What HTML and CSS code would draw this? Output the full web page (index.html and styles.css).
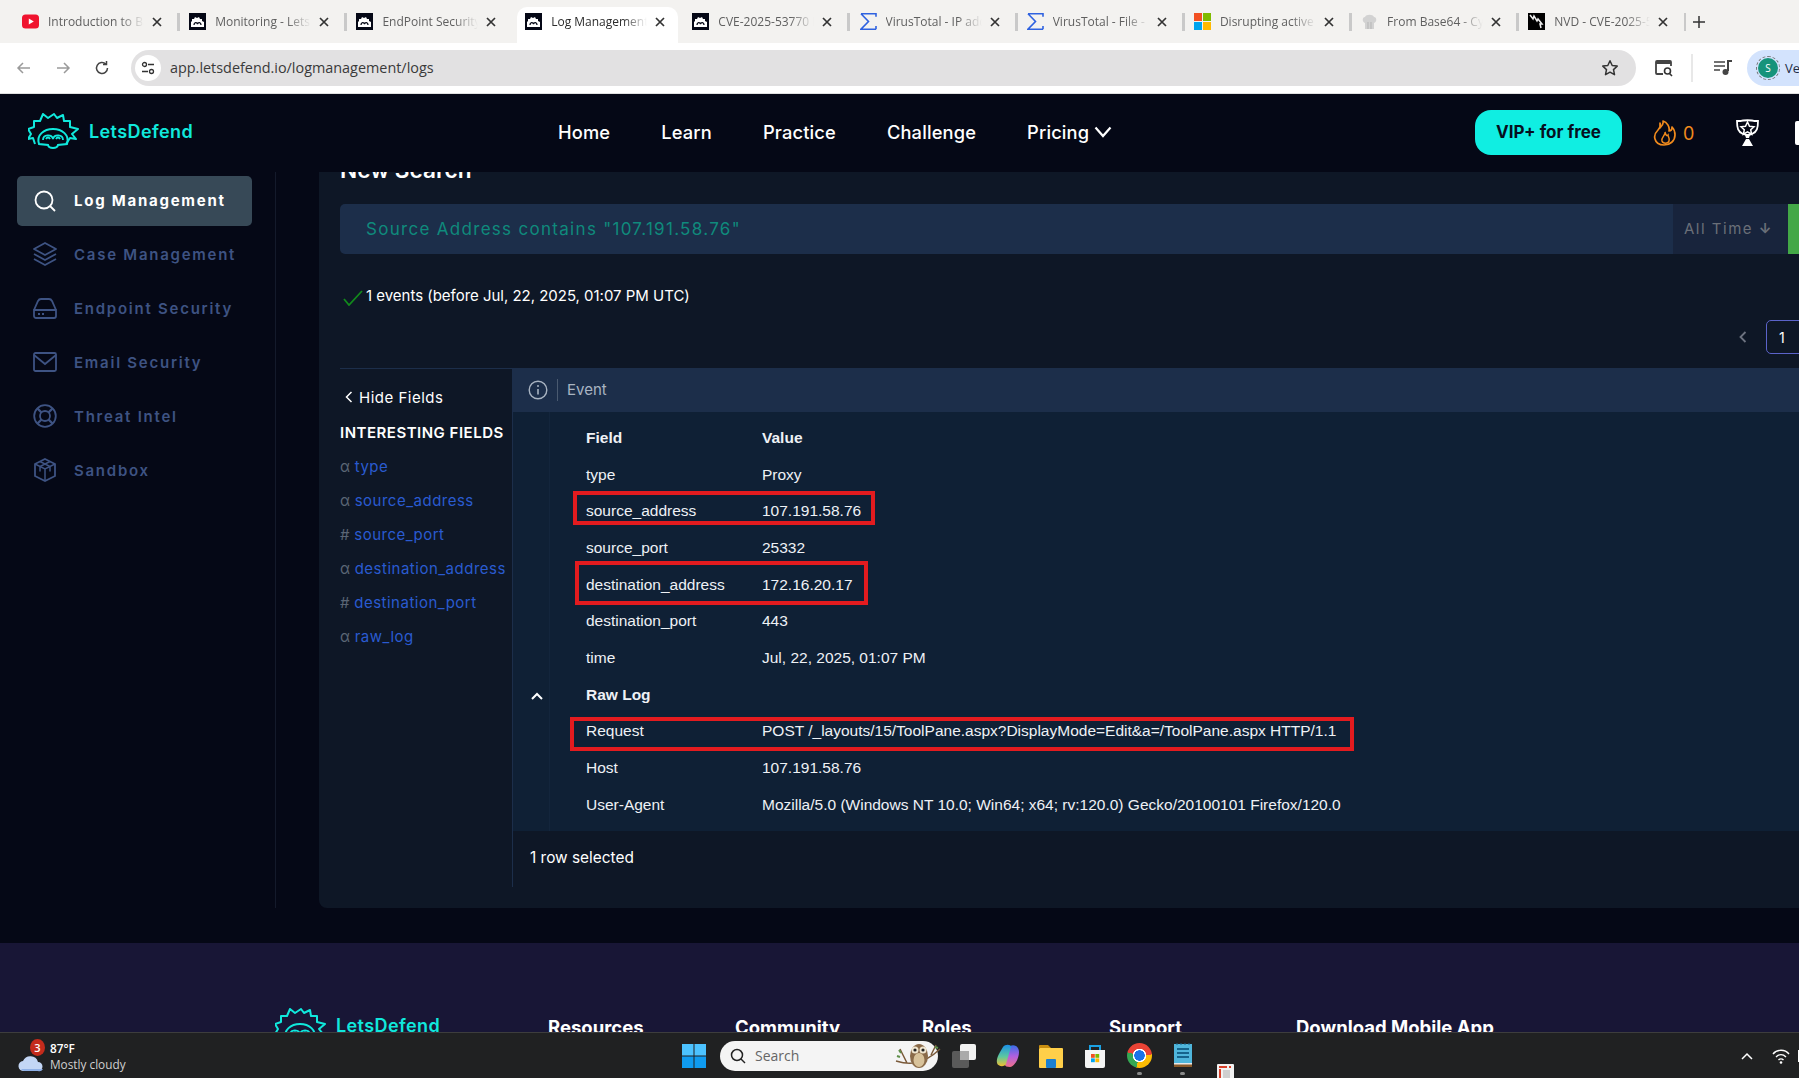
FILE: index.html
```html
<!DOCTYPE html>
<html lang="en">
<head>
  <meta charset="UTF-8">
  <title>Log Management - LetsDefend</title>
  <meta name="viewport" content="width=device-width, initial-scale=1.0">
  <link rel="stylesheet" href="styles.css">
</head>
<body>

  <svg class="defs" width="0" height="0">
    <symbol id="logo" viewBox="0 0 51 38">
      <path d="M7 31 5 25 0 26 3 21 0 16 6 14 6 8 12 8 15 1 20 5 26 1 29 5 35 2 36 8 42 8 42 14 50 16 44 21 48 26 42 25 38 31" fill="none" stroke="#10e8dc" stroke-width="2" stroke-linejoin="round"/>
      <path d="M11 31c-3-9 5-15 14-15s17 6 14 15l-9 1c-1 4-9 4-10 0z" fill="none" stroke="#10e8dc" stroke-width="2"/>
      <path d="M15 27c0-6 9-6 10-1 1-5 10-5 10 1M18 26c1-2 3-2 4 0M28 26c1-2 3-2 4 0" fill="none" stroke="#10e8dc" stroke-width="1.8"/>
    </symbol>
    <symbol id="fav-ld" viewBox="0 0 17 17">
      <rect width="17" height="17" fill="#050816"/>
      <path d="M2 14V9l1-1V6l2 0 1-2 2 1 2-1 1 2 2 0 0 2 2 1v5z" fill="#fff"/>
      <path d="M5 12c0-3 3-3 3.500-1C9 9 12 9 12 12" fill="none" stroke="#050816" stroke-width="1.300"/>
    </symbol>
    <symbol id="fav-vt" viewBox="0 0 17 17">
      <path d="M1 .8h15v3M16 16.200H1L8.500 8.500 1 .8M16 13v3.200" fill="none" stroke="#2f62e0" stroke-width="1.600"/>
    </symbol>
    <symbol id="close-x" viewBox="0 0 10 10">
      <path d="M1 1l8 8M9 1 1 9" stroke="#333" stroke-width="1.700" fill="none"/>
    </symbol>
  </svg>

  <div class="tabstrip">
    <div class="tab">
      <svg class="fav" viewBox="0 0 17 17"><rect y="1.500" width="17" height="14" rx="3.500" fill="#f0142f"/><path d="M6.800 5.500v6l5-3z" fill="#fff"/></svg>
      <span class="tab-title">Introduction to Bash</span>
      <svg class="tab-close"><use href="#close-x"/></svg>
      <i class="tab-sep"></i>
    </div>
    <div class="tab">
      <svg class="fav"><use href="#fav-ld"/></svg>
      <span class="tab-title">Monitoring - LetsDefend</span>
      <svg class="tab-close"><use href="#close-x"/></svg>
      <i class="tab-sep"></i>
    </div>
    <div class="tab">
      <svg class="fav"><use href="#fav-ld"/></svg>
      <span class="tab-title">EndPoint Security</span>
      <svg class="tab-close"><use href="#close-x"/></svg>
    </div>
    <div class="tab tab-active">
      <svg class="fav"><use href="#fav-ld"/></svg>
      <span class="tab-title">Log Management</span>
      <svg class="tab-close"><use href="#close-x"/></svg>
    </div>
    <div class="tab">
      <svg class="fav"><use href="#fav-ld"/></svg>
      <span class="tab-title">CVE-2025-53770 Detail</span>
      <svg class="tab-close"><use href="#close-x"/></svg>
      <i class="tab-sep"></i>
    </div>
    <div class="tab">
      <svg class="fav"><use href="#fav-vt"/></svg>
      <span class="tab-title">VirusTotal - IP address</span>
      <svg class="tab-close"><use href="#close-x"/></svg>
      <i class="tab-sep"></i>
    </div>
    <div class="tab">
      <svg class="fav"><use href="#fav-vt"/></svg>
      <span class="tab-title">VirusTotal - File -</span>
      <svg class="tab-close"><use href="#close-x"/></svg>
      <i class="tab-sep"></i>
    </div>
    <div class="tab">
      <svg class="fav" viewBox="0 0 17 17"><rect width="8" height="8" fill="#f25022"/><rect x="9" width="8" height="8" fill="#7fba00"/><rect y="9" width="8" height="8" fill="#00a4ef"/><rect x="9" y="9" width="8" height="8" fill="#ffb900"/></svg>
      <span class="tab-title">Disrupting active exploitation</span>
      <svg class="tab-close"><use href="#close-x"/></svg>
      <i class="tab-sep"></i>
    </div>
    <div class="tab">
      <svg class="fav" viewBox="0 0 17 17"><path d="M4 10C1 9 1 4 4 4c1-3 8-3 9 0 3 0 3 5 0 6v6H4z" fill="#d2d2d2"/><path d="M7 16V9M10 16V9" stroke="#b5b5b5" fill="none"/></svg>
      <span class="tab-title">From Base64 - CyberChef</span>
      <svg class="tab-close"><use href="#close-x"/></svg>
      <i class="tab-sep"></i>
    </div>
    <div class="tab">
      <svg class="fav" viewBox="0 0 17 17"><rect width="17" height="17" fill="#000"/><path d="M2 2l3 4 1-3 3 5 1-2 4 5-2 0 1 4" fill="none" stroke="#eee" stroke-width="1.500"/></svg>
      <span class="tab-title">NVD - CVE-2025-53770</span>
      <svg class="tab-close"><use href="#close-x"/></svg>
      <i class="tab-sep tab-sep-thin"></i>
    </div>
    <svg class="tab-new" viewBox="0 0 12 12"><path d="M6 0v12M0 6h12" stroke="#333" stroke-width="1.500"/></svg>
  </div>

  <div class="toolbar">
    <svg class="tool-icon" viewBox="0 0 16 16"><path d="M14 8H2M7 3 2 8l5 5" fill="none" stroke="#9a9a9a" stroke-width="1.500"/></svg>
    <svg class="tool-icon" viewBox="0 0 16 16"><path d="M2 8h12M9 3l5 5-5 5" fill="none" stroke="#9a9a9a" stroke-width="1.500"/></svg>
    <svg class="tool-icon" viewBox="0 0 16 16"><path d="M13.500 8a5.500 5.500 0 1 1-1.700-4M12.500 1v3.500H9" fill="none" stroke="#444" stroke-width="1.500"/></svg>
    <div class="omnibox">
      <span class="site-chip">
        <svg viewBox="0 0 14 14" width="14" height="14"><circle cx="3.500" cy="3.500" r="2" fill="none" stroke="#333" stroke-width="1.300"/><path d="M7 3.500h6M1 10.500h6" stroke="#333" stroke-width="1.300"/><circle cx="10.500" cy="10.500" r="2" fill="none" stroke="#333" stroke-width="1.300"/></svg>
      </span>
      <span class="url">app.letsdefend.io/logmanagement/logs</span>
      <svg class="star" viewBox="0 0 18 18"><path d="M9 1.800l2.200 4.700 5 .6-3.700 3.500 1 5.100L9 13.200l-4.500 2.500 1-5.100L1.800 7.100l5-.6z" fill="none" stroke="#333" stroke-width="1.500" stroke-linejoin="round"/></svg>
    </div>
    <svg class="tool-side lens" viewBox="0 0 20 20"><path d="M9 16H3a1 1 0 0 1-1-1V4a1 1 0 0 1 1-1h13a1 1 0 0 1 1 1v4" fill="none" stroke="#444" stroke-width="1.800"/><path d="M2 3h15v3H2z" fill="#444"/><circle cx="13.500" cy="13" r="3" fill="none" stroke="#333" stroke-width="1.600"/><path d="M15.500 15.500 18 18" stroke="#333" stroke-width="1.600"/></svg>
    <i class="tool-sep"></i>
    <svg class="tool-side media" viewBox="0 0 20 20"><path d="M1 4h11M1 8h11M1 12h6" stroke="#444" stroke-width="1.600"/><path d="M15 2v11" stroke="#444" stroke-width="2"/><circle cx="12.500" cy="14" r="3" fill="#444"/><path d="M15 2h4v2h-4z" fill="#444"/></svg>
    <div class="profile">
      <span class="avatar">S</span>
      <span class="profile-name">Verify it's you</span>
    </div>
  </div>

  <header class="topnav">
    <div class="brand">
      <svg class="brand-logo"><use href="#logo"/></svg>
      <span class="brand-name">LetsDefend</span>
    </div>
    <nav class="mainnav">
      <a>Home</a>
      <a>Learn</a>
      <a>Practice</a>
      <a>Challenge</a>
      <a>Pricing <svg viewBox="0 0 18 12" width="18" height="12"><path d="M1.500 1.500 9 10l7.500-8.500" fill="none" stroke="#fff" stroke-width="2.200"/></svg></a>
    </nav>
    <button class="vip">VIP+ for free</button>
    <svg class="flame" viewBox="0 0 24 26"><path d="M7 3c1 3 0 5-2 7-3 3-4 6-3 9 1 4 5 6 9 6 6 0 11-4 11-10 0-3-1-6-3-8 0 2-1 4-3 4 1-4-2-9-6-10 1 3-1 5-3 7 0-2 0-4 0-5z" fill="none" stroke="#f08a1d" stroke-width="1.700" stroke-linejoin="round"/><path d="M12 12c1 3-4 5-3 9 1 3 6 3 7 0 1-3-1-4-1-6-1 1-2 1-3-3z" fill="none" stroke="#f08a1d" stroke-width="1.500"/></svg>
    <span class="streak">0</span>
    <svg class="trophy" viewBox="0 0 25 28"><path d="M2 2h4c2-1 11-1 13 0h4c0 7-1 11-6 13-2 1-6 1-9 0C3 13 2 9 2 2z" fill="none" stroke="#fff" stroke-width="1.800"/><path d="M12.500 3l2 4.200 4.500.5-3.300 3 .9 4.500-4.100-2.300-4.100 2.300.9-4.500L6 7.700l4.500-.5z" fill="none" stroke="#fff" stroke-width="1.500"/><path d="M10 16h5l-1 3h-3zM11 20h3l4 7H7z" fill="#fff"/></svg>
    <i class="nav-edge"></i>
  </header>

  <div class="viewport">
    <div class="shell">
      <aside class="sidebar">
        <a class="side-item side-active">
          <svg viewBox="0 0 24 24"><circle cx="11" cy="11" r="8.500" fill="none" stroke="currentColor" stroke-width="1.800"/><path d="M17 17l5 5" stroke="currentColor" stroke-width="1.800"/></svg>
          Log Management
        </a>
        <a class="side-item">
          <svg viewBox="0 0 24 24"><path d="M12 1 23 7 12 13 1 7zM1 12l11 6 11-6M1 17l11 6 11-6" fill="none" stroke="currentColor" stroke-width="1.800" stroke-linejoin="round"/></svg>
          Case Management
        </a>
        <a class="side-item">
          <svg viewBox="0 0 24 24"><path d="M1 14 5 5c1-2 2-2 3-2h8c1 0 2 0 3 2l4 9M1 14h22v6a2 2 0 0 1-2 2H3a2 2 0 0 1-2-2z" fill="none" stroke="currentColor" stroke-width="1.800"/><path d="M5 18h2M9 18h2" stroke="currentColor" stroke-width="1.800"/></svg>
          Endpoint Security
        </a>
        <a class="side-item">
          <svg viewBox="0 0 24 24"><rect x="1" y="3" width="22" height="18" rx="1.500" fill="none" stroke="currentColor" stroke-width="1.800"/><path d="M1 5l11 9 11-9" fill="none" stroke="currentColor" stroke-width="1.800"/></svg>
          Email Security
        </a>
        <a class="side-item">
          <svg viewBox="0 0 24 24"><circle cx="12" cy="12" r="10.800" fill="none" stroke="currentColor" stroke-width="1.800"/><circle cx="12" cy="12" r="5" fill="none" stroke="currentColor" stroke-width="1.800"/><path d="M4.500 4.500 8.500 8.500M19.500 4.500 15.500 8.500M4.500 19.500 8.500 15.500M19.500 19.500 15.500 15.500" stroke="currentColor" stroke-width="2.400"/></svg>
          Threat Intel
        </a>
        <a class="side-item">
          <svg viewBox="0 0 24 24"><path d="M12 1 22 6v12l-10 5-10-5V6z" fill="none" stroke="currentColor" stroke-width="1.800"/><path d="M2 6l10 5 10-5M12 11v12M7 3.500l10 5v5M17 3.500 7 8.500v5" fill="none" stroke="currentColor" stroke-width="1.500"/></svg>
          Sandbox
        </a>
      </aside>

      <main class="panel">
        <h2 class="panel-title">New Search</h2>

        <div class="searchbar">
          <div class="search-query">Source Address contains "107.191.58.76"</div>
          <div class="search-time">All Time <span class="time-arrow">&#8595;</span></div>
          <div class="search-go"></div>
        </div>

        <div class="result-count">
          <svg viewBox="0 0 20 16" width="20" height="16"><path d="M1 9l5 6L19 1" fill="none" stroke="#128a1c" stroke-width="1.800"/></svg>
          1 events (before Jul, 22, 2025, 01:07 PM UTC)
        </div>

        <div class="pager">
          <span class="page-prev"><svg viewBox="0 0 8 12" width="8" height="12"><path d="M6.500 1 1.500 6l5 5" fill="none" stroke="#6d7380" stroke-width="1.800"/></svg></span>
          <span class="page-num">1</span>
        </div>

        <div class="results">
          <div class="fields">
            <div class="hide-fields">
              <svg viewBox="0 0 8 12" width="8" height="12"><path d="M6.500 1 1.500 6l5 5" fill="none" stroke="#fff" stroke-width="1.500"/></svg>
              Hide Fields
            </div>
            <div class="fields-title">INTERESTING FIELDS</div>
            <div class="field-item"><span class="field-type">&#945;</span> type</div>
            <div class="field-item"><span class="field-type">&#945;</span> source_address</div>
            <div class="field-item"><span class="field-type">#</span> source_port</div>
            <div class="field-item"><span class="field-type">&#945;</span> destination_address</div>
            <div class="field-item"><span class="field-type">#</span> destination_port</div>
            <div class="field-item"><span class="field-type">&#945;</span> raw_log</div>
          </div>

          <div class="events">
            <div class="event-head">
              <svg viewBox="0 0 20 20" width="20" height="20"><circle cx="10" cy="10" r="8.800" fill="none" stroke="#a9b4c2" stroke-width="1.400"/><path d="M10 9v5.500" stroke="#a9b4c2" stroke-width="1.600"/><circle cx="10" cy="6" r="1" fill="#a9b4c2"/></svg>
              <i class="event-sep"></i>
              <span>Event</span>
            </div>

            <div class="details">
              <div class="row row-bold"><span></span><span class="cell-field">Field</span><span>Value</span></div>
              <div class="row"><span></span><span class="cell-field">type</span><span>Proxy</span></div>
              <div class="row"><span></span><span class="cell-field">source_address</span><span>107.191.58.76</span></div>
              <div class="row"><span></span><span class="cell-field">source_port</span><span>25332</span></div>
              <div class="row"><span></span><span class="cell-field">destination_address</span><span>172.16.20.17</span></div>
              <div class="row"><span></span><span class="cell-field">destination_port</span><span>443</span></div>
              <div class="row"><span></span><span class="cell-field">time</span><span>Jul, 22, 2025, 01:07 PM</span></div>
              <div class="row row-bold">
                <span class="row-toggle"><svg viewBox="0 0 12 8" width="12" height="8"><path d="M1 7l5-5 5 5" fill="none" stroke="#fff" stroke-width="2"/></svg></span>
                <span class="cell-field">Raw Log</span><span></span>
              </div>
              <div class="row"><span></span><span class="cell-field">Request</span><span>POST /_layouts/15/ToolPane.aspx?DisplayMode=Edit&amp;a=/ToolPane.aspx HTTP/1.1</span></div>
              <div class="row"><span></span><span class="cell-field">Host</span><span>107.191.58.76</span></div>
              <div class="row"><span></span><span class="cell-field">User-Agent</span><span>Mozilla/5.0 (Windows NT 10.0; Win64; x64; rv:120.0) Gecko/20100101 Firefox/120.0</span></div>

              <div class="mark mark-source"></div>
              <div class="mark mark-dest"></div>
              <div class="mark mark-request"></div>
            </div>

            <div class="selected-count">1 row selected</div>
          </div>
        </div>
      </main>
    </div>

    <footer class="footer">
      <div class="foot-brand">
        <svg class="brand-logo"><use href="#logo"/></svg>
        <span class="brand-name">LetsDefend</span>
      </div>
      <div class="foot-col foot-resources">Resources</div>
      <div class="foot-col foot-community">Community</div>
      <div class="foot-col foot-roles">Roles</div>
      <div class="foot-col foot-support">Support</div>
      <div class="foot-col">Download Mobile App</div>
    </footer>
  </div>

  <div class="taskbar">
    <div class="weather">
      <div class="weather-icon">
        <svg viewBox="0 0 26 18" width="26" height="18"><path d="M6 17a5 5 0 0 1-1-10 8 8 0 0 1 15 1 4.500 4.500 0 0 1 0 9z" fill="#c3d6f5"/><path d="M6 17a5 5 0 0 1-3-2h22a4.500 4.500 0 0 1-5 2z" fill="#8fb0e6"/></svg>
        <span class="weather-badge">3</span>
      </div>
      <div class="weather-text">
        <div class="weather-temp">87°F</div>
        <div class="weather-desc">Mostly cloudy</div>
      </div>
    </div>

    <svg class="task-win" viewBox="0 0 24 24"><rect width="11.500" height="11.500" fill="#4cc2ff"/><rect x="12.500" width="11.500" height="11.500" fill="#4cc2ff"/><rect y="12.500" width="11.500" height="11.500" fill="#0f9bf0"/><rect x="12.500" y="12.500" width="11.500" height="11.500" fill="#0f9bf0"/></svg>

    <div class="task-search">
      <svg viewBox="0 0 16 16" width="16" height="16"><circle cx="7" cy="7" r="5.500" fill="none" stroke="#222" stroke-width="1.500"/><path d="M11 11l4 4" stroke="#222" stroke-width="1.500"/></svg>
      <span>Search</span>
      <svg class="owl" viewBox="0 0 46 30" width="46" height="30">
        <path d="M1 20c10 3 25 6 44-12M12 22 5 8M36 14l5-10" fill="none" stroke="#7a5a3a" stroke-width="1.500"/>
        <path d="M4 9l2 3M40 6l3 1M2 15l3 1" stroke="#5f8f4a" stroke-width="2"/>
        <ellipse cx="24" cy="15" rx="9" ry="12" fill="#8a6a48"/>
        <ellipse cx="24" cy="19" rx="5.500" ry="7" fill="#d8c29a"/>
        <circle cx="20" cy="9" r="3.500" fill="#f0e6d0"/><circle cx="28" cy="9" r="3.500" fill="#f0e6d0"/>
        <circle cx="20" cy="9" r="1.600" fill="#222"/><circle cx="28" cy="9" r="1.600" fill="#222"/>
      </svg>
    </div>

    <svg class="task-icon" viewBox="0 0 24 24"><rect y="7" width="17" height="17" rx="2" fill="#5a5a5a"/><rect x="8" width="16" height="16" rx="2" fill="#f2f2f2"/><rect x="8" y="7" width="9" height="9" fill="#aaa"/></svg>
    <svg class="task-icon" viewBox="0 0 24 24">
      <defs><linearGradient id="cop" x1="0" y1="0" x2="0" y2="1"><stop offset="0" stop-color="#1a8fe8"/><stop offset=".55" stop-color="#5cc8a0"/><stop offset="1" stop-color="#f0c030"/></linearGradient><linearGradient id="cop2" x1="0" y1="0" x2="0" y2="1"><stop offset="0" stop-color="#3a6ee8"/><stop offset=".5" stop-color="#b060e0"/><stop offset="1" stop-color="#f0708a"/></linearGradient></defs>
      <path d="M14 2c5-2 9 1 9 6 0 6-4 14-9 15-3 0-5-1-5-2z" fill="url(#cop2)"/>
      <path d="M7 3c2-3 8-3 8 0L10 20c-1 3-8 3-9-1-1-5 3-11 6-16z" fill="url(#cop)"/>
    </svg>
    <svg class="task-icon" viewBox="0 0 24 24"><path d="M0 2a1 1 0 0 1 1-1h8l3 3H0z" fill="#c98e10"/><rect y="4" width="24" height="20" rx="1" fill="#ffcf49"/><rect x="7" y="15" width="10" height="9" rx="1" fill="#1a7fd0"/></svg>
    <svg class="task-icon" viewBox="0 0 24 24"><path d="M7 6V2h10v4" fill="none" stroke="#1ba1e2" stroke-width="2"/><path d="M2 6h20v16a2 2 0 0 1-2 2H4a2 2 0 0 1-2-2z" fill="#f5f5f5"/><rect x="8" y="10" width="3.800" height="3.800" fill="#f25022"/><rect x="12.400" y="10" width="3.800" height="3.800" fill="#7fba00"/><rect x="8" y="14.400" width="3.800" height="3.800" fill="#00a4ef"/><rect x="12.400" y="14.400" width="3.800" height="3.800" fill="#ffb900"/></svg>
    <span class="task-item task-running"><span class="chrome-icon"></span></span>
    <span class="task-item task-running task-notes">
      <svg viewBox="0 0 18 24" width="18" height="24"><rect y="1" width="18" height="19" fill="#4fb6dc"/><rect y="20" width="18" height="4" fill="#8a5a2a"/><rect y="20" width="18" height="1.500" fill="#e8e8e8"/><path d="M3 6h12M3 10h12M3 14h12" stroke="#16648c" stroke-width="1.800"/><path d="M3 0v2M7 0v2M11 0v2M15 0v2" stroke="#16648c"/></svg>
    </span>
    <svg class="task-tool" viewBox="0 0 17 16"><rect width="17" height="18" rx="1" fill="#f2f2f2"/><path d="M2 2h8v2H2zM2 5h2v10H2zM12 2h2v2h-2z" fill="#d8402a"/><rect x="6" y="6" width="7" height="10" fill="#cfcfcf"/></svg>

    <div class="tray">
      <svg viewBox="0 0 12 8" width="12" height="8"><path d="M1 7l5-5 5 5" fill="none" stroke="#fff" stroke-width="1.500"/></svg>
      <svg class="tray-wifi" viewBox="0 0 18 16" width="18" height="16"><path d="M1 6c4-5 12-5 16 0M4 9c3-3 7-3 10 0M6.500 12c1.500-1.500 3.500-1.500 5 0" fill="none" stroke="#fff" stroke-width="1.400"/><circle cx="9" cy="14.500" r="1.300" fill="#fff"/></svg>
      <i class="tray-edge"></i>
    </div>
  </div>

</body>
</html>
```

FILE: styles.css
```css
* {
  box-sizing: border-box;
}

html, body {
  margin: 0;
  padding: 0;
  height: 100%;
}

body {
  width: 1799px;
  height: 1078px;
  display: flex;
  flex-direction: column;
  overflow: hidden;
  background-color: #050816;
  font-family: "Inter", "Liberation Sans", sans-serif;
  color: #fff;
}

.defs {
  position: absolute;
}

/* browser chrome */
.tabstrip {
  height: 43px;
  flex-shrink: 0;
  display: flex;
  align-items: flex-end;
  padding-left: 14px;
  background-color: #f3f2f0;
  font-family: "Open Sans", sans-serif;
}

.tab {
  width: 167.2px;
  height: 36px;
  flex-shrink: 0;
  display: flex;
  align-items: center;
  padding-left: 8px;
  padding-bottom: 7px;
}

.tab-active {
  width: 161px;
  margin-right: 6.2px;
  margin-left: 1.6px;
  padding-left: 8px;
  background-color: #fff;
  border-radius: 10px 10px 0 0;
}

.fav {
  width: 17px;
  height: 17px;
  flex-shrink: 0;
}

.tab-title {
  width: 96px;
  margin-left: 9px;
  font-size: 12px;
  color: #5f5f5f;
  white-space: nowrap;
  overflow: hidden;
  -webkit-mask-image: linear-gradient(to right, #000 75%, transparent 100%);
  mask-image: linear-gradient(to right, #000 75%, transparent 100%);
}

.tab-active .tab-title {
  color: #2c2c2c;
}

.tab-close {
  width: 10px;
  height: 10px;
  flex-shrink: 0;
  margin-left: 8px;
}

.tab-sep {
  width: 3px;
  height: 18px;
  margin-left: 15px;
  background-color: #c9c9c9;
}

.tab-sep-thin {
  width: 2px;
  margin-left: 16px;
}

.tab-new {
  width: 12px;
  height: 12px;
  margin-left: 6px;
  margin-bottom: 15px;
  flex-shrink: 0;
}

.toolbar {
  height: 51px;
  flex-shrink: 0;
  display: flex;
  align-items: center;
  padding: 0 0 1px 16px;
  background-color: #fff;
  border-bottom: 1px solid #e0e0e0;
  overflow: hidden;
}

.tool-icon {
  width: 16px;
  height: 16px;
  flex-shrink: 0;
  margin-right: 23px;
}

.omnibox {
  width: 1505px;
  height: 36px;
  flex-shrink: 0;
  margin-left: -2px;
  display: flex;
  align-items: center;
  padding: 0 17px 0 4px;
  background-color: #e2e1e2;
  border-radius: 18px;
}

.site-chip {
  width: 26px;
  height: 26px;
  display: flex;
  align-items: center;
  justify-content: center;
  background-color: #fff;
  border-radius: 50%;
}

.url {
  flex: 1;
  margin-left: 9px;
  font-family: "Open Sans", sans-serif;
  font-size: 14.4px;
  color: #3a3a3a;
}

.star {
  width: 18px;
  height: 18px;
}

.tool-side {
  width: 20px;
  height: 20px;
  flex-shrink: 0;
}

.lens {
  margin-left: 18px;
}

.tool-sep {
  width: 2px;
  height: 28px;
  flex-shrink: 0;
  margin: 0 20px 0 17px;
  background-color: #e8e8e8;
}

.media {
  margin-right: 14px;
}

.profile {
  width: 120px;
  height: 36px;
  flex-shrink: 0;
  display: flex;
  align-items: center;
  padding-left: 11px;
  background-color: #d3e3fd;
  border-radius: 18px 0 0 18px;
  font-family: "Open Sans", sans-serif;
  font-size: 13px;
  color: #1f2d45;
  white-space: nowrap;
}

.avatar {
  width: 20px;
  height: 20px;
  flex-shrink: 0;
  display: flex;
  align-items: center;
  justify-content: center;
  margin-right: 7px;
  background-color: #16937a;
  border-radius: 50%;
  outline: 1.5px dashed #777;
  outline-offset: 1.5px;
  font-size: 10px;
  color: #fff;
}

/* top navigation */
.topnav {
  height: 78px;
  flex-shrink: 0;
  display: flex;
  align-items: center;
  background-color: #050816;
}

.topnav > * {
  flex-shrink: 0;
}

.brand {
  width: 558px;
  display: flex;
  align-items: center;
  padding-left: 28px;
  margin-bottom: 2px;
}

.brand-logo {
  width: 51px;
  height: 38px;
  flex-shrink: 0;
}

.brand-name {
  margin-left: 10px;
  margin-bottom: 1px;
  font-size: 18px;
  font-weight: 600;
  color: #10e8dc;
  letter-spacing: 0.4px;
}

.mainnav {
  display: flex;
  gap: 51px;
  width: 917px;
  margin-bottom: 2px;
}

.mainnav a {
  display: flex;
  align-items: center;
  gap: 5px;
  font-size: 18.3px;
  font-weight: 500;
  letter-spacing: 0.15px;
  color: #fff;
  white-space: nowrap;
}

.vip {
  width: 147px;
  height: 45px;
  margin-bottom: 2px;
  border: none;
  border-radius: 16px;
  background-color: #10eee2;
  font-family: inherit;
  font-size: 17px;
  font-weight: 700;
  color: #06101f;
}

.flame {
  width: 24px;
  height: 26px;
  margin-left: 31px;
}

.streak {
  margin-left: 6px;
  width: 12px;
  font-size: 18px;
  color: #f08a1d;
}

.trophy {
  width: 25px;
  height: 28px;
  margin-left: 40px;
}

.nav-edge {
  width: 6px;
  height: 24px;
  margin-left: 35px;
  background-color: #fff;
  border-radius: 2px;
}

/* page */
.viewport {
  flex: 1;
  min-height: 0;
  overflow: hidden;
}

.shell {
  height: 736px;
  display: flex;
}

.sidebar {
  width: 276px;
  flex-shrink: 0;
  padding: 4px 23px 0 17px;
  margin-right: 43px;
  border-right: 1px solid #141a2b;
}

.side-item {
  height: 50px;
  margin-bottom: 4px;
  display: flex;
  align-items: center;
  gap: 17px;
  padding: 0 0 2px 16px;
  border-radius: 5px;
  font-size: 15px;
  font-weight: 600;
  letter-spacing: 1.75px;
  color: #3e5383;
  white-space: nowrap;
}

.side-item svg {
  width: 24px;
  height: 24px;
  flex-shrink: 0;
}

.side-active {
  background-color: #374957;
  color: #fff;
  font-weight: 700;
  padding-bottom: 1px;
}

.panel {
  width: 1600px;
  flex-shrink: 0;
  padding-left: 21px;
  overflow: hidden;
  background-color: #0e1726;
  border-radius: 0 0 0 8px;
}

.panel-title {
  height: 32px;
  margin: -18px 0 0;
  font-size: 22.6px;
  line-height: 32px;
  font-weight: 600;
  color: #fff;
}

.searchbar {
  height: 50px;
  margin-top: 18px;
  display: flex;
  background-color: #1c2e4a;
  border-radius: 5px 0 0 5px;
}

.search-query {
  width: 1333px;
  padding-left: 26px;
  font-size: 17px;
  line-height: 50px;
  letter-spacing: 1.3px;
  color: #0f8a7c;
}

.search-time {
  width: 115px;
  padding-left: 11px;
  background-color: #18243c;
  font-size: 15px;
  line-height: 50px;
  letter-spacing: 1.5px;
  color: #6a6f78;
}

.time-arrow {
  font-size: 14px;
  font-weight: 700;
  letter-spacing: 0;
}

.search-go {
  flex: 1;
  background-color: #43a847;
}

.result-count {
  height: 24px;
  margin-top: 29px;
  display: flex;
  align-items: center;
  gap: 3px;
  padding-left: 3px;
  font-size: 15px;
  letter-spacing: -0.02px;
  white-space: nowrap;
}

.result-count svg {
  margin-top: 5px;
}

.pager {
  height: 34px;
  margin-top: 13px;
  display: flex;
  gap: 6px;
  padding-left: 1385px;
}

.page-prev {
  width: 35px;
  height: 34px;
  display: flex;
  align-items: center;
  justify-content: center;
}

.page-num {
  width: 40px;
  height: 34px;
  padding-left: 12px;
  border: 1px solid #5b63c9;
  border-radius: 5px;
  font-size: 14px;
  line-height: 33px;
}

.results {
  margin-top: 14px;
  display: flex;
  border-top: 1px solid #1c2e4a;
}

.fields {
  width: 173px;
  height: 518px;
  flex-shrink: 0;
  border-right: 1px solid #1c2e4a;
}

.hide-fields {
  height: 24px;
  margin-top: 16px;
  display: flex;
  align-items: center;
  gap: 6px;
  padding-left: 5px;
  font-size: 15px;
  letter-spacing: 0.5px;
}

.fields-title {
  height: 24px;
  margin-top: 12px;
  margin-bottom: 5px;
  font-size: 15px;
  font-weight: 600;
  letter-spacing: 0.5px;
  line-height: 24px;
  white-space: nowrap;
}

.field-item {
  height: 34px;
  font-size: 15px;
  letter-spacing: 0.5px;
  line-height: 34px;
  color: #2a5bd0;
  white-space: nowrap;
}

.field-type {
  color: #5b6675;
  letter-spacing: 0;
}

.events {
  flex: 1;
}

.event-head {
  height: 43px;
  display: flex;
  align-items: center;
  padding: 0 0 2px 15px;
  background-color: #1c2e4a;
  font-size: 15px;
  color: #a9b4c2;
}

.event-sep {
  width: 1px;
  height: 22px;
  margin: 0 9px 0 9px;
  background-color: #4a5a70;
}

.details {
  position: relative;
  height: 419px;
  padding-top: 7.5px;
  background: linear-gradient(#13253c, #13253c) 36px 0 / 1px 100% no-repeat #0f2035;
  font-family: "Liberation Sans", sans-serif;
  font-size: 15.5px;
}

.row {
  height: 36.7px;
  display: grid;
  grid-template-columns: 36px 213px 1fr;
  align-items: center;
  color: #eef1f5;
  white-space: nowrap;
}

.row-bold {
  font-weight: 700;
}

.cell-field {
  padding-left: 37px;
}

.row-toggle {
  display: flex;
  justify-content: center;
  padding-left: 12px;
  padding-top: 3px;
}

.mark {
  position: absolute;
  border: 4px solid #e31b1f;
}

.mark-source {
  top: 79px;
  left: 60px;
  width: 302px;
  height: 34px;
}

.mark-dest {
  top: 149px;
  left: 62px;
  width: 293px;
  height: 44px;
}

.mark-request {
  top: 305px;
  left: 57px;
  width: 784px;
  height: 34px;
}

.selected-count {
  padding: 17px 0 0 17px;
  font-size: 15.4px;
}

/* footer */
.footer {
  height: 120px;
  margin-top: 35px;
  display: flex;
  padding: 65px 0 0 275px;
  background-color: #181636;
  font-size: 18.5px;
  font-weight: 700;
}

.foot-brand {
  width: 273px;
  display: flex;
  align-items: flex-start;
}

.foot-brand .brand-name {
  margin-top: 7px;
  font-size: 18px;
}

.foot-col {
  padding-top: 8px;
  white-space: nowrap;
}

.foot-resources,
.foot-community,
.foot-roles,
.foot-support {
  width: 187px;
}

/* windows taskbar */
.taskbar {
  height: 46px;
  flex-shrink: 0;
  display: flex;
  align-items: center;
  background-color: #202122;
  border-top: 1px solid #3d3d3d;
  overflow: hidden;
}

.weather {
  width: 682px;
  flex-shrink: 0;
  display: flex;
  align-items: center;
  padding-left: 18px;
}

.weather-icon {
  position: relative;
  width: 32px;
  height: 40px;
  padding-top: 18px;
}

.weather-badge {
  position: absolute;
  top: 3px;
  left: 12px;
  width: 15px;
  height: 17px;
  background-color: #c42b1c;
  border-radius: 50%;
  text-align: center;
  font-family: "Open Sans", sans-serif;
  font-size: 11px;
  font-weight: 600;
  line-height: 17px;
}

.weather-text {
  font-family: "Open Sans", sans-serif;
  font-size: 11.8px;
  line-height: 16px;
}

.weather-temp {
  font-weight: 600;
}

.weather-desc {
  color: #d0d0d0;
}

.task-win {
  width: 24px;
  height: 24px;
  flex-shrink: 0;
}

.task-search {
  width: 218px;
  height: 30px;
  flex-shrink: 0;
  display: flex;
  align-items: center;
  margin-left: 14px;
  padding-left: 10px;
  background-color: #f4f4f4;
  border-radius: 15px;
  font-family: "Open Sans", sans-serif;
  font-size: 14px;
  color: #666;
}

.task-search span {
  flex: 1;
  margin-left: 9px;
}

.owl {
  margin-right: -3px;
}

.task-icon {
  width: 24px;
  height: 24px;
  flex-shrink: 0;
  margin-left: 19.5px;
}

.task-search + .task-icon {
  margin-left: 14px;
}

.task-item {
  position: relative;
  width: 25px;
  height: 25px;
  flex-shrink: 0;
  margin-left: 20px;
}

.task-notes {
  width: 18px;
  margin-left: 22px;
}

.task-running::after {
  content: "";
  position: absolute;
  left: 50%;
  bottom: -7px;
  width: 5px;
  height: 3px;
  margin-left: -2.5px;
  background-color: #8a8a8a;
  border-radius: 2px;
}

.chrome-icon {
  display: block;
  width: 25px;
  height: 25px;
  border-radius: 50%;
  background:
    radial-gradient(circle, #1a73e8 0 5px, #fff 5.5px 6.5px, transparent 7px),
    conic-gradient(#ea4335 0 85deg, #fbbc04 85deg 195deg, #34a853 195deg 285deg, #ea4335 285deg);
}

.task-tool {
  width: 17px;
  height: 16px;
  flex-shrink: 0;
  margin-left: 25px;
  margin-top: 32px;
}

.tray {
  display: flex;
  align-items: center;
  margin-left: 507px;
}

.tray-wifi {
  margin-left: 19px;
}

.tray-edge {
  width: 4px;
  height: 12px;
  margin-left: 8px;
  border: 1px solid #fff;
}
```
